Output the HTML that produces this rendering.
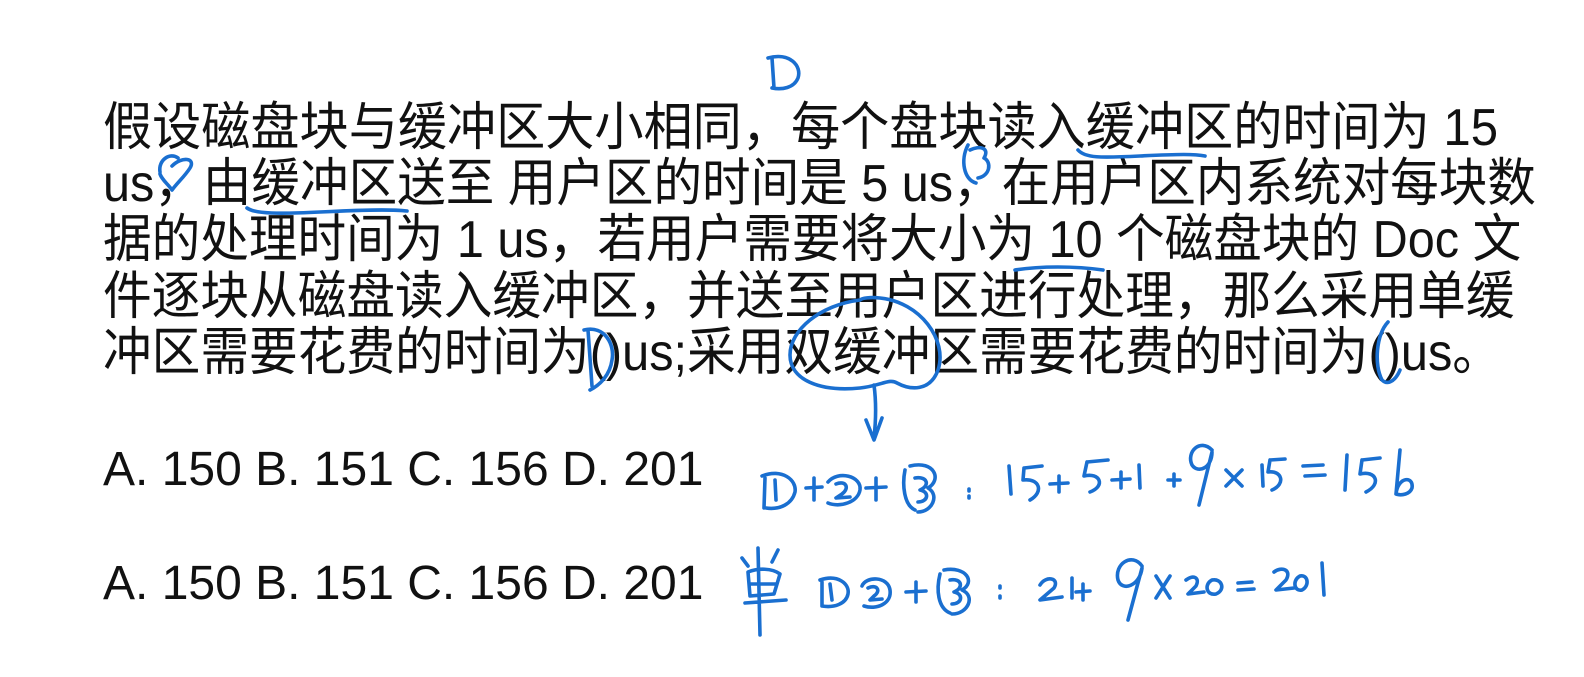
<!DOCTYPE html>
<html><head><meta charset="utf-8"><style>
html,body{margin:0;padding:0;background:#fff;width:1584px;height:677px;overflow:hidden;position:relative}
.l{position:absolute;left:103px;font-family:"Liberation Sans","Noto Sans CJK SC",sans-serif;font-size:52px;line-height:56px;color:#111;white-space:nowrap;transform-origin:0 50%}
.o{font-size:48px}
svg{position:absolute;left:0;top:0}
svg path{fill:none;stroke:#1a6fd0;stroke-width:3.6;stroke-linecap:round;stroke-linejoin:round}
</style></head><body>
<div class="l" style="top:100px;transform:scaleX(0.945)">假设磁盘块与缓冲区大小相同，每个盘块读入缓冲区的时间为 15</div>
<div class="l" style="top:156px;transform:scaleX(0.934)">us，由缓冲区送至 用户区的时间是 5 us，在用户区内系统对每块数</div>
<div class="l" style="top:212px;transform:scaleX(0.935)">据的处理时间为 1 us，若用户需要将大小为 10 个磁盘块的 Doc 文</div>
<div class="l" style="top:269px;transform:scaleX(0.936)">件逐块从磁盘读入缓冲区，并送至用户区进行处理，那么采用单缓</div>
<div class="l" style="top:325px;transform:scaleX(0.936)">冲区需要花费的时间为()us;采用双缓冲区需要花费的时间为()us。</div>
<div class="l o" style="top:442px">A. 150 B. 151 C. 156 D. 201</div>
<div class="l o" style="top:556px">A. 150 B. 151 C. 156 D. 201</div>
<svg width="1584" height="677" viewBox="0 0 1584 677">
<path d="M772 58 L774 88 M768 58 C790 52 802 66 798 78 C794 88 782 90 772 88"/>
<path d="M1078 150 C1085 158 1100 158 1140 156 C1180 154 1195 154 1205 156"/>
<path d="M160 172 C158 160 170 152 178 158 M172 166 C182 156 196 158 190 168 C185 176 178 182 172 190 C168 184 162 180 160 174"/>
<path d="M247 208 C255 214 280 214 320 212 C360 210 390 209 407 211"/>
<path d="M970 150 C980 145 990 148 984 158 C992 162 990 176 978 178 M968 145 C960 160 964 180 976 183"/>
<path d="M1015 270 C1040 266 1075 266 1103 270"/>
<path d="M588 330 L592 386 M584 330 C605 325 615 345 612 360 C610 375 600 385 590 390"/>
<path d="M860 300 C820 305 790 330 790 355 C790 380 820 392 860 388 C880 386 890 378 897 383 C910 390 930 392 938 370 C948 340 920 302 880 298 C870 297 862 298 860 300"/>
<path d="M874 385 C876 400 876 420 874 438 M866 420 L874 440 L882 418"/>
<path d="M1388 322 C1376 335 1374 365 1382 380 C1388 386 1396 380 1400 370"/>
<!-- equation 1 -->
<path d="M765 478 L764 508 M762 476 C782 468 797 480 795 492 C792 504 780 510 766 508 M775 480 L776 500"/>
<path d="M806 488 L822 487 M814 478 L814 500"/>
<path d="M828 482 C838 470 862 476 860 490 C858 502 840 508 828 503 M836 484 C846 480 850 488 842 494 L836 498 L850 497"/>
<path d="M866 488 L886 487 M876 478 L876 500"/>
<path d="M905 470 C902 485 904 505 915 510 M910 466 C935 460 942 480 928 488 C940 495 932 512 918 512 M915 478 C928 476 930 486 920 490 C930 492 928 502 918 502"/>
<path d="M969 489 L969 491 M969 496 L969 498"/>
<path d="M1009 466 L1011 494 M1024 468 L1042 466 M1024 468 L1023 480 C1040 478 1044 492 1030 500"/>
<path d="M1050 484 L1068 483 M1059 476 L1059 492"/>
<path d="M1087 462 L1108 460 M1087 462 L1084 476 C1100 472 1106 486 1090 492"/>
<path d="M1112 480 L1130 479 M1121 472 L1121 488"/>
<path d="M1139 465 L1140 488"/>
<path d="M1168 480 L1180 480 M1174 474 L1174 486"/>
<path d="M1212 450 C1200 438 1186 452 1192 465 C1198 474 1212 468 1212 452 L1199 505"/>
<path d="M1226 470 L1242 486 M1242 470 L1226 486"/>
<path d="M1262 465 L1263 486 M1270 460 L1285 459 M1270 460 L1268 472 C1282 470 1286 484 1272 490"/>
<path d="M1303 466 L1323 465 M1305 476 L1325 475"/>
<path d="M1347 455 L1345 490 M1362 460 L1380 458 M1362 460 L1360 474 C1376 470 1382 484 1366 492 M1400 450 L1396 494 C1398 476 1414 476 1412 488 C1410 494 1402 496 1396 494"/>
<!-- equation 2 -->
<path d="M758 548 L760 635 M742 558 L748 566 M778 550 L772 562 M748 572 C758 568 772 568 780 574 L774 594 L750 596 Z M750 584 L776 584 M745 603 L786 600"/>
<path d="M822 582 L822 606 M820 580 C838 574 850 584 848 594 C846 604 834 608 822 606 M830 584 L832 600"/>
<path d="M862 586 C866 576 888 576 890 590 C892 604 876 610 864 606 M868 588 C876 584 882 590 874 596 L870 600 L882 599"/>
<path d="M906 592 L926 591 M916 582 L916 602"/>
<path d="M940 574 C936 590 938 608 950 613 M944 570 C966 566 976 582 962 590 C976 596 968 614 952 614 M950 580 C962 578 964 588 954 592 C964 594 962 604 952 604"/>
<path d="M1000 586 L1000 588 M1000 596 L1000 598"/>
<path d="M1040 585 C1046 575 1060 578 1054 588 L1040 600 L1062 597 M1072 578 L1072 598"/>
<path d="M1076 592 L1090 591 M1083 584 L1083 600"/>
<path d="M1142 566 C1132 552 1114 564 1118 580 C1122 592 1140 586 1142 568 L1128 620"/>
<path d="M1156 576 L1170 598 M1170 576 L1156 598"/>
<path d="M1186 580 C1194 574 1200 578 1196 586 L1188 594 L1204 592 M1212 580 C1204 584 1206 596 1216 594 C1226 590 1222 578 1212 580"/>
<path d="M1238 583 L1252 582 M1238 590 L1254 589"/>
<path d="M1274 572 C1282 566 1292 570 1286 580 L1276 590 L1294 588 M1300 576 C1292 580 1294 592 1302 590 C1310 586 1308 574 1300 576 M1322 563 L1324 595"/>
</svg>
</body></html>
